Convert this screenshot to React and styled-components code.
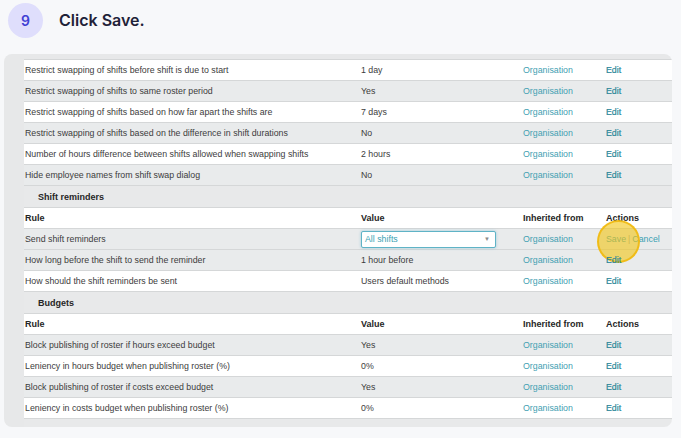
import React from "react";
import styled, { createGlobalStyle } from "styled-components";

const Global = createGlobalStyle`
  html, body { margin: 0; padding: 0; background: #f7f8fa; }
  body { width: 681px; height: 438px; overflow: hidden; font-family: "Liberation Sans", Arial, sans-serif; }
`;

const Page = styled.div`
  display: flex;
  flex-direction: column;
`;

const Header = styled.header`
  display: flex;
  align-items: center;
  gap: 16px;
  height: 40px;
  padding-left: 8px;
  box-sizing: border-box;
`;

const StepBadge = styled.div`
  width: 35px;
  height: 35px;
  border-radius: 50%;
  background: #dfdefc;
  color: #4040d4;
  display: flex;
  align-items: center;
  justify-content: center;
  font-family: Inter, "Noto Sans", sans-serif;
  font-size: 14px;
  font-weight: 600;
`;

const Title = styled.h1`
  margin: 0;
  font-family: Inter, "Noto Sans", sans-serif;
  font-size: 16px;
  font-weight: 600;
  color: #1f2238;
`;

const Card = styled.div`
  margin: 14px 9px 0 4px;
  height: 373px;
  border-radius: 8px;
  background: #e7e8e9;
  padding: 5px 0 0 20px;
  box-sizing: border-box;
  overflow: hidden;
`;

const Table = styled.div`
  display: flex;
  flex-direction: column;
  background: #fff;
`;

const toneBg = { white: "#ffffff", gray: "#e9ebec", section: "#e8e9ea" };

const Row = styled.div`
  display: grid;
  grid-template-columns: 336px 162px 83px 1fr;
  align-items: center;
  height: ${(p) => (p.$tone === "section" ? 22 : 21)}px;
  box-sizing: border-box;
  border-top: 1px solid #d5d7d8;
  background: ${(p) => toneBg[p.$tone || "white"]};
  font-size: 8.8px;
  color: #3c3c3c;
`;

const Cell = styled.div`
  padding-left: 1px;
  white-space: nowrap;
  position: relative;
`;

const HeadCell = styled(Cell)`
  font-weight: bold;
  color: #262626;
  font-size: 9px;
`;

const SectionTitle = styled.div`
  grid-column: 1 / -1;
  padding-left: 14px;
  padding-top: 1px;
  font-weight: bold;
  color: #262626;
  font-size: 9px;
`;

const OrgLink = styled.span`
  color: #43a0b2;
`;

const EditLink = styled.span`
  color: #2a8698;
  -webkit-text-stroke: 0.2px #2a8698;
`;

const Select = styled.div`
  width: 135px;
  height: 17px;
  box-sizing: border-box;
  border: 1px solid #5fb3c6;
  border-radius: 2px;
  box-shadow: 0 0 3px rgba(90, 170, 200, 0.55);
  background: #fff;
  display: flex;
  align-items: center;
  justify-content: space-between;
  padding: 0 5px 0 3px;
  color: #3a9fb3;
`;

const Caret = styled.span`
  color: #8a8a8a;
  font-size: 6px;
`;

const Actions = styled.span`
  color: #3a9fb3;
`;

const Divider = styled.span`
  color: #9aa;
  margin: 0 2px;
`;

const Highlight = styled.span`
  position: absolute;
  left: -8px;
  top: -14px;
  width: 43px;
  height: 43px;
  border-radius: 50%;
  background: rgba(242, 196, 20, 0.6);
  border: 2px solid rgba(240, 185, 10, 0.85);
  box-sizing: border-box;
  pointer-events: none;
`;

const SaveText = styled.span`
  position: relative;
  color: #3a9fb3;
`;

const swapRows = [
  ["Restrict swapping of shifts before shift is due to start", "1 day", "white"],
  ["Restrict swapping of shifts to same roster period", "Yes", "gray"],
  ["Restrict swapping of shifts based on how far apart the shifts are", "7 days", "white"],
  ["Restrict swapping of shifts based on the difference in shift durations", "No", "gray"],
  ["Number of hours difference between shifts allowed when swapping shifts", "2 hours", "white"],
  ["Hide employee names from shift swap dialog", "No", "gray"],
];

const budgetRows = [
  ["Block publishing of roster if hours exceed budget", "Yes", "gray"],
  ["Leniency in hours budget when publishing roster (%)", "0%", "white"],
  ["Block publishing of roster if costs exceed budget", "Yes", "gray"],
  ["Leniency in costs budget when publishing roster (%)", "0%", "white"],
];

function RuleRow({ rule, value, tone }) {
  return (
    <Row $tone={tone}>
      <Cell>{rule}</Cell>
      <Cell>{value}</Cell>
      <Cell><OrgLink>Organisation</OrgLink></Cell>
      <Cell><EditLink>Edit</EditLink></Cell>
    </Row>
  );
}

function HeadRow() {
  return (
    <Row $tone="white">
      <HeadCell>Rule</HeadCell>
      <HeadCell>Value</HeadCell>
      <HeadCell>Inherited from</HeadCell>
      <HeadCell>Actions</HeadCell>
    </Row>
  );
}

export default function App() {
  return (
    <Page>
      <Global />
      <Header>
        <StepBadge>9</StepBadge>
        <Title>Click Save.</Title>
      </Header>
      <Card>
        <Table>
          {swapRows.map(([r, v, t]) => (
            <RuleRow key={r} rule={r} value={v} tone={t} />
          ))}
          <Row $tone="section"><SectionTitle>Shift reminders</SectionTitle></Row>
          <HeadRow />
          <Row $tone="gray">
            <Cell>Send shift reminders</Cell>
            <Cell>
              <Select>
                <span>All shifts</span>
                <Caret>▼</Caret>
              </Select>
            </Cell>
            <Cell><OrgLink>Organisation</OrgLink></Cell>
            <Cell>
              <Actions>
                <SaveText>Save</SaveText>
                <Divider>|</Divider>
                Cancel
              </Actions>
              <Highlight />
            </Cell>
          </Row>
          <RuleRow rule="How long before the shift to send the reminder" value="1 hour before" tone="gray" />
          <RuleRow rule="How should the shift reminders be sent" value="Users default methods" tone="white" />
          <Row $tone="section"><SectionTitle>Budgets</SectionTitle></Row>
          <HeadRow />
          {budgetRows.map(([r, v, t], i) => (
            <RuleRow key={i} rule={r} value={v} tone={t} />
          ))}
          <Row $tone="section" />
        </Table>
      </Card>
    </Page>
  );
}
